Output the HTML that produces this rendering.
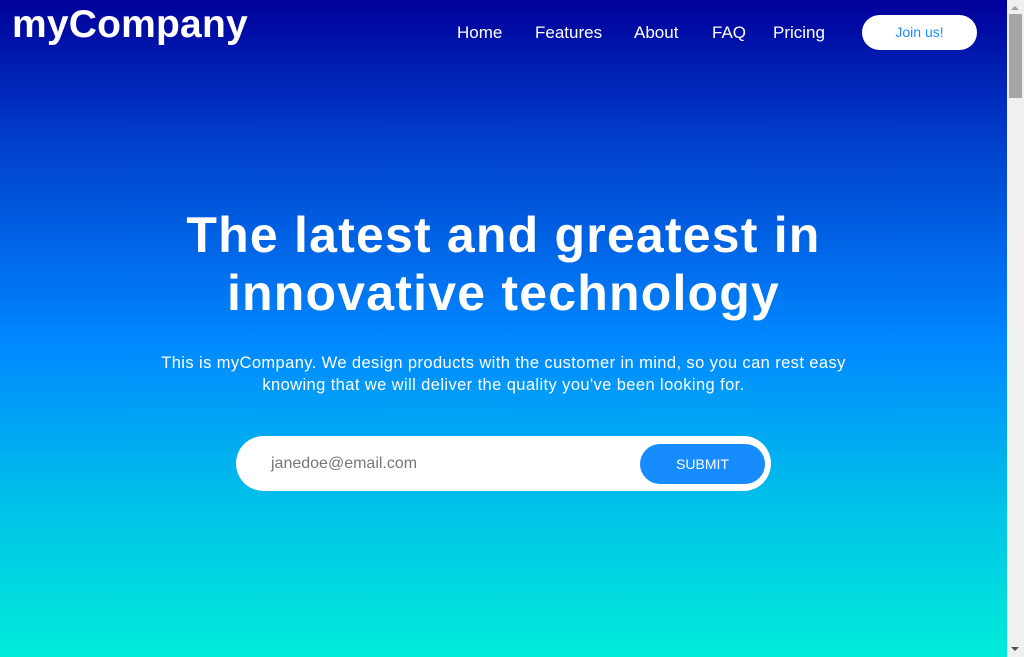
<!DOCTYPE html>
<html><head><style>
*{margin:0;padding:0;box-sizing:border-box}
html,body{width:1024px;height:657px;overflow:hidden}
body{font-family:"Liberation Sans",sans-serif;color:#fff;position:relative}
.bg{position:absolute;left:0;top:0;width:1007px;height:657px;background:linear-gradient(180deg,#00009a 0%,#0040cc 22%,#0088ff 52%,#00c4e8 78%,#00ecd8 100%)}
.sb{position:absolute;left:1007px;top:0;width:17px;height:657px;background:#f0f0f0}
.thumb{position:absolute;left:1009px;top:14px;width:13px;height:84px;background:#a6a6a6}
.logo{position:absolute;left:12px;top:3px;font-size:39px;font-weight:bold;letter-spacing:0.2px}
.nav{position:absolute;top:23px;font-size:17px}
.join{position:absolute;left:862px;top:15px;width:115px;height:35px;border-radius:18px;background:#fff;color:#1a8cff;font-size:14px;text-align:center;line-height:35px}
h1{position:absolute;left:0;width:1007px;top:206px;text-align:center;font-size:50px;line-height:58px;font-weight:bold;letter-spacing:1.2px}
p{position:absolute;left:0;width:1007px;top:352px;text-align:center;font-size:16.5px;line-height:22px;letter-spacing:0.4px}
.form{position:absolute;left:236px;top:436px;width:535px;height:55px;background:#fff;border-radius:28px}
.ph{position:absolute;left:35px;top:19px;color:#777;font-size:16px}
.btn{position:absolute;left:404px;top:8px;width:125px;height:40px;border-radius:20px;background:#168cff;color:#fff;font-size:14px;text-align:center;line-height:40px}
</style></head><body>
<div class="bg"></div>
<div class="sb"></div><div class="thumb"></div>
<div style="position:absolute;left:1011px;top:6px;width:0;height:0;border-left:4px solid transparent;border-right:4px solid transparent;border-bottom:4px solid #a0a0a0"></div>
<div style="position:absolute;left:1011px;top:647px;width:0;height:0;border-left:4px solid transparent;border-right:4px solid transparent;border-top:4px solid #505050"></div>
<div class="logo">myCompany</div>
<div class="nav" style="left:457px">Home</div>
<div class="nav" style="left:535px">Features</div>
<div class="nav" style="left:634px">About</div>
<div class="nav" style="left:712px">FAQ</div>
<div class="nav" style="left:773px">Pricing</div>
<div class="join">Join us!</div>
<h1>The latest and greatest in<br>innovative technology</h1>
<p>This is myCompany. We design products with the customer in mind, so you can rest easy<br>knowing that we will deliver the quality you've been looking for.</p>
<div class="form"><div class="ph">janedoe@email.com</div><div class="btn">SUBMIT</div></div>
</body></html>
